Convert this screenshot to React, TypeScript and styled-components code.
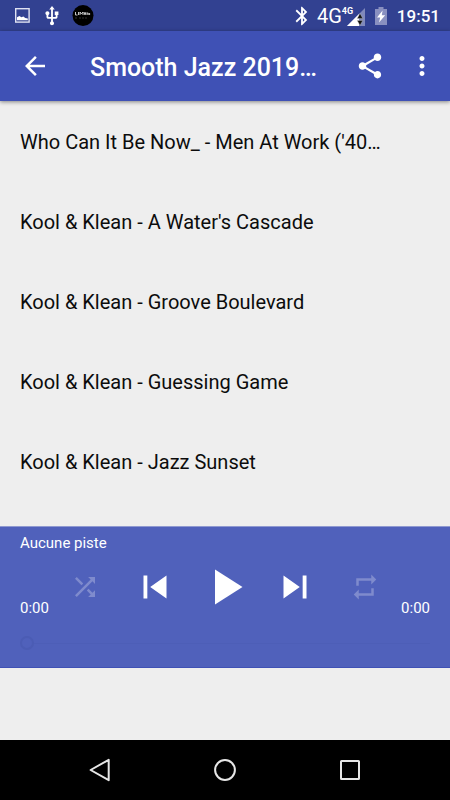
import React from "react";
import styled, { createGlobalStyle } from "styled-components";

const GlobalStyle = createGlobalStyle`
  *, *::before, *::after { box-sizing: border-box; }
  body {
    margin: 0;
    background: #eeeeee;
    font-family: Roboto, "Liberation Sans", sans-serif;
  }
`;

const Screen = styled.div`
  display: flex;
  flex-direction: column;
  min-height: 100vh;
`;

const StatusBar = styled.header`
  display: flex;
  justify-content: space-between;
  align-items: center;
  height: 31px;
  padding: 1px 10px 0 12px;
  background: #324191;
  color: #fff;
`;

const StatusGroup = styled.div<{ $gap: number }>`
  display: flex;
  align-items: center;
  gap: ${(p) => p.$gap}px;
`;

const Network = styled.div`
  display: flex;
  align-items: center;
  font-size: 20px;
  line-height: 24px;
`;

const NetworkBadge = styled.div`
  display: flex;
  align-items: flex-end;
  position: relative;
  width: 23px;
  height: 20px;
  justify-content: flex-end;
`;

const NetworkType = styled.span`
  position: absolute;
  top: 0;
  left: 0;
  font-size: 9px;
  font-weight: 700;
  line-height: 10px;
`;

const Clock = styled.time`
  font-size: 17px;
  font-weight: 500;
  line-height: 22px;
`;

const Toolbar = styled.div`
  display: flex;
  align-items: center;
  height: 70px;
  padding: 0 6px 0 10px;
  background: #3f51b5;
  color: #fff;
  box-shadow: 0 1px 4px rgba(0, 0, 0, 0.45);
  z-index: 1;
`;

const Title = styled.h1`
  flex: 1;
  min-width: 0;
  margin: 0 0 0 30px;
  padding-top: 4px;
  overflow: hidden;
  white-space: nowrap;
  font-size: 25px;
  font-weight: 500;
  line-height: 32px;
`;

const IconButton = styled.button<{ $width: number }>`
  display: flex;
  align-items: center;
  justify-content: center;
  width: ${(p) => p.$width}px;
  height: 60px;
  padding: 0;
  border: 0;
  background: none;
  color: inherit;
  cursor: pointer;
`;

const TrackList = styled.ul`
  flex: 1;
  margin: 0;
  padding: 1px 0 0;
  list-style: none;
`;

const Track = styled.li`
  display: flex;
  align-items: center;
  height: 80px;
  padding: 0 20px;
  font-size: 20px;
  line-height: 24px;
  white-space: nowrap;
  color: #0c0c0c;
`;

const Player = styled.section`
  display: flex;
  flex-direction: column;
  height: 142px;
  margin-bottom: 72px;
  padding: 6px 20px 0;
  border-top: 1px solid #8f99d0;
  border-bottom: 1px solid #3f51b5;
  background: #5061bb;
  color: #fff;
  font-size: 15px;
  line-height: 20px;
`;

const TrackName = styled.p`
  margin: 0;
`;

const Transport = styled.div`
  display: flex;
  align-items: flex-end;
  height: 65px;
`;

const Elapsed = styled.span<{ $end?: boolean }>`
  width: 30px;
  text-align: ${(p) => (p.$end ? "right" : "left")};
`;

const Controls = styled.div`
  flex: 1;
  align-self: flex-start;
  display: grid;
  grid-template-columns: repeat(5, 1fr);
  margin-top: 4px;
`;

const ControlButton = styled.button<{ $dim?: boolean }>`
  display: flex;
  align-items: center;
  justify-content: center;
  height: 60px;
  padding: 0;
  border: 0;
  background: none;
  color: ${(p) => (p.$dim ? "#7f8bcd" : "#fff")};
  cursor: pointer;
`;

const Seek = styled.input`
  appearance: none;
  width: 100%;
  height: 14px;
  margin: 18px 0 0;
  background: none;

  &::-webkit-slider-runnable-track {
    height: 14px;
    background: linear-gradient(#4d5eb7, #4d5eb7) 14px 50% / 100% 1px no-repeat;
  }

  &::-webkit-slider-thumb {
    appearance: none;
    width: 14px;
    height: 14px;
    border: 2px solid #4b5cb4;
    border-radius: 50%;
    background: #5061bb;
  }
`;

const NavBar = styled.nav`
  display: flex;
  align-items: center;
  justify-content: center;
  height: 60px;
  background: #000;
  color: #e6e6e6;
`;

function Glyph({ d, size }: { d: string; size: number }) {
  return (
    <svg width={size} height={size} viewBox="0 0 24 24" fill="currentColor" aria-hidden="true">
      <path d={d} />
    </svg>
  );
}

const paths = {
  back: "M20 11H7.83l5.59-5.59L12 4l-8 8 8 8 1.41-1.41L7.83 13H20v-2z",
  share:
    "M18 16.08c-.76 0-1.44.3-1.96.77L8.91 12.7c.05-.23.09-.46.09-.7s-.04-.47-.09-.7l7.05-4.11c.54.5 1.25.81 2.04.81 1.66 0 3-1.34 3-3s-1.34-3-3-3-3 1.34-3 3c0 .24.04.47.09.7L8.04 9.81C7.5 9.31 6.79 9 6 9c-1.66 0-3 1.34-3 3s1.34 3 3 3c.79 0 1.5-.31 2.04-.81l7.12 4.16c-.05.21-.08.43-.08.65 0 1.61 1.31 2.92 2.92 2.92s2.92-1.31 2.92-2.92-1.31-2.92-2.92-2.92z",
  more: "M12 8c1.1 0 2-.9 2-2s-.9-2-2-2-2 .9-2 2 .9 2 2 2zm0 2c-1.1 0-2 .9-2 2s.9 2 2 2 2-.9 2-2-.9-2-2-2zm0 6c-1.1 0-2 .9-2 2s.9 2 2 2 2-.9 2-2-.9-2-2-2z",
  shuffle:
    "M10.59 9.17L5.41 4 4 5.41l5.17 5.17 1.42-1.41zM14.5 4l2.04 2.04L4 18.59 5.41 20 17.96 7.46 20 9.5V4h-5.5zm.33 9.41l-1.41 1.41 3.13 3.13L14.5 20H20v-5.5l-2.04 2.04-3.13-3.13z",
  previous: "M6 6h2v12H6zm3.5 6l8.5 6V6z",
  play: "M8 5v14l11-7z",
  next: "M6 18l8.5-6L6 6v12zM16 6v12h2V6h-2z",
  repeat: "M7 7h10v3l4-4-4-4v3H5v6h2V7zm10 10H7v-3l-4 4 4 4v-3h12v-6h-2v4z",
  bluetooth:
    "M17.71 7.71L12 2h-1v7.59L6.41 5 5 6.41 10.59 12 5 17.59 6.41 19 11 14.41V22h1l5.71-5.71-4.3-4.29 4.3-4.29zM13 5.83l1.88 1.88L13 9.59V5.83zm1.88 10.46L13 18.17v-3.76l1.88 1.88z",
  usb: "M15 7v4h1v2h-3V5h2l-3-4-3 4h2v8H8v-2.07c.7-.37 1.2-1.08 1.2-1.93 0-1.21-.99-2.2-2.2-2.2-1.21 0-2.2.99-2.2 2.2 0 .85.5 1.56 1.2 1.93V13c0 1.11.89 2 2 2h3v3.05c-.71.37-1.2 1.1-1.2 1.95 0 1.22.99 2.2 2.2 2.2 1.21 0 2.2-.98 2.2-2.2 0-.85-.49-1.58-1.2-1.95V15h3c1.11 0 2-.89 2-2v-2h1V7h-4z",
};

function PictureIcon() {
  return (
    <svg width="20" height="20" viewBox="0 0 20 20" aria-hidden="true">
      <rect x="3.7" y="2.7" width="13.4" height="13.4" fill="none" stroke="#dfe2f2" strokeWidth="1.4" />
      <path d="M5 14.3v-3l2.4-1.2 2 1.2 2-.8 1.8 1.6 2.6.4v1.8z" fill="#fff" />
    </svg>
  );
}

function AppBadgeIcon() {
  return (
    <svg width="22" height="22" viewBox="0 0 22 22" aria-hidden="true">
      <circle cx="11" cy="10.6" r="10.5" fill="#000" />
      <path
        d="M3.5 7v3h2M6.5 7v3M8 10V7l1.4 2L11 7v3M12 7l1 3 1-3M15 10V8h1.2v2M17.6 10V8"
        fill="none"
        stroke="#d8d8d8"
        strokeWidth="0.9"
      />
      <path d="M4 12v2M8 12v2M11 12v2M14 12v2" stroke="#333" strokeWidth="1" />
    </svg>
  );
}

function SignalIcon() {
  return (
    <svg width="18" height="18" viewBox="0 0 18 18" aria-hidden="true">
      <path d="M18 0v18H0z" fill="#8089bb" />
      <path d="M12 6v12H0z" fill="#fff" />
      <path d="M13 5.4l2.8 5h-5.6zM13 17.4l2.8-5h-5.6z" fill="#111" stroke="#c9cdd0" strokeWidth="0.4" />
    </svg>
  );
}

function BatteryIcon() {
  return (
    <svg width="12" height="18" viewBox="0 0 12 18" aria-hidden="true">
      <path d="M3.5 0h5v2H12v16H0V2h3.5z" fill="#8990c0" />
      <path d="M7.6 3.6L2 10.4h3.2L4 15.4l6.2-7.2H6.8z" fill="#fff" />
    </svg>
  );
}

const tracks = [
  "Who Can It Be Now_ - Men At Work ('40…",
  "Kool & Klean - A Water's Cascade",
  "Kool & Klean - Groove Boulevard",
  "Kool & Klean - Guessing Game",
  "Kool & Klean - Jazz Sunset",
];

export default function App() {
  return (
    <Screen>
      <GlobalStyle />
      <StatusBar>
        <StatusGroup $gap={9}>
          <PictureIcon />
          <Glyph d={paths.usb} size={22} />
          <AppBadgeIcon />
        </StatusGroup>
        <StatusGroup $gap={10}>
          <StatusGroup $gap={4}>
            <Glyph d={paths.bluetooth} size={22} />
            <Network>
              4G
              <NetworkBadge>
                <NetworkType>4G</NetworkType>
                <SignalIcon />
              </NetworkBadge>
            </Network>
          </StatusGroup>
          <BatteryIcon />
          <Clock>19:51</Clock>
        </StatusGroup>
      </StatusBar>
      <Toolbar>
        <IconButton type="button" aria-label="Retour" $width={50}>
          <Glyph d={paths.back} size={30} />
        </IconButton>
        <Title>Smooth Jazz 2019…</Title>
        <IconButton type="button" aria-label="Partager" $width={60}>
          <Glyph d={paths.share} size={30} />
        </IconButton>
        <IconButton type="button" aria-label="Plus d'options" $width={44}>
          <Glyph d={paths.more} size={30} />
        </IconButton>
      </Toolbar>
      <TrackList>
        {tracks.map((track) => (
          <Track key={track}>{track}</Track>
        ))}
      </TrackList>
      <Player>
        <TrackName>Aucune piste</TrackName>
        <Transport>
          <Elapsed>0:00</Elapsed>
          <Controls>
            <ControlButton type="button" aria-label="Lecture aléatoire" $dim>
              <Glyph d={paths.shuffle} size={30} />
            </ControlButton>
            <ControlButton type="button" aria-label="Précédent">
              <Glyph d={paths.previous} size={46} />
            </ControlButton>
            <ControlButton type="button" aria-label="Lire">
              <Glyph d={paths.play} size={60} />
            </ControlButton>
            <ControlButton type="button" aria-label="Suivant">
              <Glyph d={paths.next} size={46} />
            </ControlButton>
            <ControlButton type="button" aria-label="Répéter" $dim>
              <Glyph d={paths.repeat} size={30} />
            </ControlButton>
          </Controls>
          <Elapsed $end>0:00</Elapsed>
        </Transport>
        <Seek type="range" aria-label="Position" min={0} max={100} defaultValue={0} />
      </Player>
      <NavBar>
        <IconButton type="button" aria-label="Précédent" $width={125}>
          <svg width="24" height="26" viewBox="0 0 24 26" fill="none" aria-hidden="true">
            <path d="M20.7 2.8v20.4L2.6 13z" stroke="currentColor" strokeWidth="2" strokeLinejoin="round" />
          </svg>
        </IconButton>
        <IconButton type="button" aria-label="Accueil" $width={125}>
          <svg width="24" height="24" viewBox="0 0 24 24" fill="none" aria-hidden="true">
            <circle cx="12" cy="12" r="9.9" stroke="currentColor" strokeWidth="2" />
          </svg>
        </IconButton>
        <IconButton type="button" aria-label="Applications récentes" $width={125}>
          <svg width="24" height="24" viewBox="0 0 24 24" fill="none" aria-hidden="true">
            <rect x="3" y="3" width="18" height="18" rx="0.5" stroke="currentColor" strokeWidth="2" />
          </svg>
        </IconButton>
      </NavBar>
    </Screen>
  );
}
